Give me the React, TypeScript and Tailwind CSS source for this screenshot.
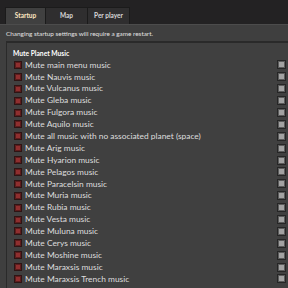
import React from "react";

const TRACKS = [
  "Mute main menu music",
  "Mute Nauvis music",
  "Mute Vulcanus music",
  "Mute Gleba music",
  "Mute Fulgora music",
  "Mute Aquilo music",
  "Mute all music with no associated planet (space)",
  "Mute Arig music",
  "Mute Hyarion music",
  "Mute Pelagos music",
  "Mute Paracelsin music",
  "Mute Muria music",
  "Mute Rubia music",
  "Mute Vesta music",
  "Mute Muluna music",
  "Mute Cerys music",
  "Mute Moshine music",
  "Mute Maraxsis music",
  "Mute Maraxsis Trench music",
];

function ModIcon() {
  return (
    <span className="flex h-[8px] w-[8px] items-center justify-center border border-[#2e1414] bg-[#5e1c1c]">
      <span className="h-[4px] w-[4px] bg-[#8f2f2f]" />
    </span>
  );
}

function Checkbox() {
  return (
    <span className="flex h-[9px] w-[9px] items-center justify-center border border-[#262626] bg-[#5c5c5c]">
      <span className="h-[5px] w-[5px] bg-[#a2a2a2]" />
    </span>
  );
}

export default function App() {
  return (
    <div
      className="h-[288px] w-[288px] overflow-hidden bg-[#232223] text-[#e2e2e2]"
      style={{ fontFamily: "Lato, 'Open Sans', sans-serif" }}
    >
      <div className="flex h-[24px] items-end px-[5px] text-[6.5px] font-bold">
        <div className="flex h-[17px] w-[41px] items-center justify-center border border-b-0 border-[#1b1b1b] bg-[#404040] text-[#ffe6c0]">
          Startup
        </div>
        <div className="flex h-[17px] w-[42px] items-center justify-center border border-b-0 border-l-0 border-[#1b1b1b] bg-[#2f2e2f] text-[#d8d8d8]">
          Map
        </div>
        <div className="flex h-[17px] w-[42px] items-center justify-center border border-b-0 border-l-0 border-[#1b1b1b] bg-[#2f2e2f] text-[#d8d8d8]">
          Per player
        </div>
      </div>
      <div className="h-full border-t border-[#4c4c4c] bg-[#3f3f3f] pl-[6px]">
        <div className="flex h-[16px] items-center pt-[2px] text-[6.4px]">
          Changing startup settings will require a game restart.
        </div>
        <div className="h-full border-l border-t-2 border-[#2a2a2a] bg-[#404040] pl-[6px] pr-[2px] pt-[4px]">
          <div className="h-[12px] text-[6.7px] font-bold leading-[12px] text-white">Mute Planet Music</div>
          {TRACKS.map((t) => (
            <div key={t} className="flex h-[11.9px] items-center text-[8.4px] text-[#dedede]">
              <span className="ml-[1px] mr-[3px]">
                <ModIcon />
              </span>
              <span className="flex-1">{t}</span>
              <Checkbox />
            </div>
          ))}
        </div>
      </div>
    </div>
  );
}
